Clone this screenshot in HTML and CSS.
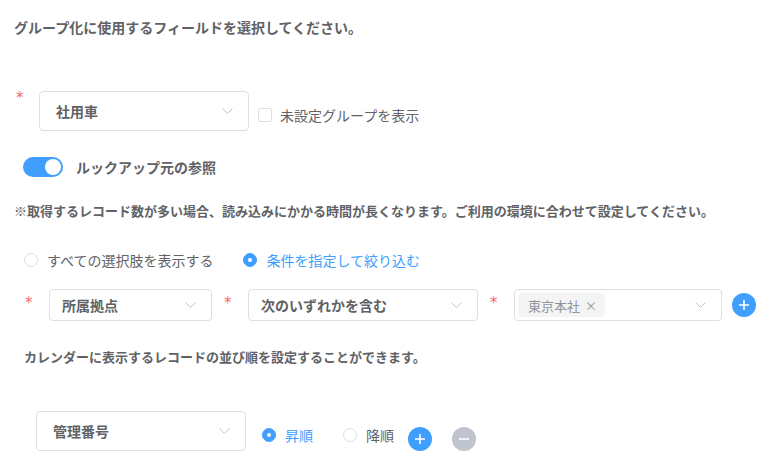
FILE: index.html
```html
<!DOCTYPE html>
<html lang="ja">
<head>
  <meta charset="UTF-8" />
  <title>グループ設定</title>
  <link rel="stylesheet" href="styles.css">
</head>
<body>
  <div class="page">
    <p class="title">グループ化に使用するフィールドを選択してください。</p>

    <div class="group-row">
      <span class="req req-first">*</span>
      <div class="select select-lg w-group">
        <span class="select-text">社用車</span>
        <svg class="chevron" width="11" height="6" viewBox="0 0 11 6"><polyline points="0.5,0.5 5.5,5.5 10.5,0.5" fill="none" stroke="#c0c4cc" stroke-width="1"/></svg>
      </div>
      <label class="check">
        <span class="check-box"></span>
        <span>未設定グループを表示</span>
      </label>
    </div>

    <div class="lookup">
      <span class="switch"><span class="switch-knob"></span></span>
      <span class="lookup-label">ルックアップ元の参照</span>
    </div>

    <p class="note">※取得するレコード数が多い場合、読み込みにかかる時間が長くなります。ご利用の環境に合わせて設定してください。</p>

    <div class="radios">
      <label class="radio">
        <span class="radio-dot"></span>
        <span>すべての選択肢を表示する</span>
      </label>
      <label class="radio checked">
        <span class="radio-dot"></span>
        <span>条件を指定して絞り込む</span>
      </label>
    </div>

    <div class="cond-row">
      <span class="req">*</span>
      <div class="select w-field">
        <span class="select-text">所属拠点</span>
        <svg class="chevron" width="11" height="6" viewBox="0 0 11 6"><polyline points="0.5,0.5 5.5,5.5 10.5,0.5" fill="none" stroke="#c0c4cc" stroke-width="1"/></svg>
      </div>
      <span class="req">*</span>
      <div class="select w-op">
        <span class="select-text">次のいずれかを含む</span>
        <svg class="chevron" width="11" height="6" viewBox="0 0 11 6"><polyline points="0.5,0.5 5.5,5.5 10.5,0.5" fill="none" stroke="#c0c4cc" stroke-width="1"/></svg>
      </div>
      <span class="req">*</span>
      <div class="select select-multi w-value">
        <span class="tag">東京本社<span class="tag-close">×</span></span>
        <svg class="chevron" width="11" height="6" viewBox="0 0 11 6"><polyline points="0.5,0.5 5.5,5.5 10.5,0.5" fill="none" stroke="#c0c4cc" stroke-width="1"/></svg>
      </div>
      <span class="circle-btn blue cond-add">
        <svg width="12" height="12" viewBox="0 0 12 12"><path d="M6 1v10M1 6h10" stroke="#fff" stroke-width="1.6"/></svg>
      </span>
    </div>

    <p class="sort-note">カレンダーに表示するレコードの並び順を設定することができます。</p>

    <div class="sort-row">
      <div class="select select-lg w-sort">
        <span class="select-text">管理番号</span>
        <svg class="chevron" width="11" height="6" viewBox="0 0 11 6"><polyline points="0.5,0.5 5.5,5.5 10.5,0.5" fill="none" stroke="#c0c4cc" stroke-width="1"/></svg>
      </div>
      <div class="sort-radios">
        <label class="radio checked">
          <span class="radio-dot"></span>
          <span>昇順</span>
        </label>
        <label class="radio">
          <span class="radio-dot"></span>
          <span>降順</span>
        </label>
      </div>
      <span class="circle-btn blue sort-add">
        <svg width="12" height="12" viewBox="0 0 12 12"><path d="M6 1v10M1 6h10" stroke="#fff" stroke-width="1.6"/></svg>
      </span>
      <span class="circle-btn gray sort-remove">
        <svg width="12" height="12" viewBox="0 0 12 12"><path d="M1 6h10" stroke="#fff" stroke-width="1.6"/></svg>
      </span>
    </div>
  </div>
</body>
</html>
```

FILE: styles.css
```css
body {
  margin: 0;
  background: #fff;
  font-family: "Noto Sans CJK JP", "Noto Sans", sans-serif;
  font-size: 14px;
  color: #606266;
}
p {
  margin: 0;
}
.page {
  padding-top: 17px;
}
.title {
  margin-left: 14px;
  line-height: 20px;
  font-weight: bold;
}
.req {
  color: #f56c6c;
  font-family: "DejaVu Sans", sans-serif;
  font-size: 15px;
  line-height: 15px;
  width: 9px;
  margin: 0 16px 0 12px;
}
.req-first {
  margin: 0 14px 0 16px;
  align-self: flex-start;
}

/* selects */
.select {
  box-sizing: border-box;
  height: 32px;
  border: 1px solid #dcdfe6;
  border-radius: 4px;
  display: flex;
  align-items: center;
  justify-content: space-between;
  padding: 0 15px 0 12px;
  background: #fff;
}
.select-lg {
  height: 40px;
  padding-left: 16px;
}
.select-text {
  font-weight: bold;
  color: #606266;
}
.chevron {
  flex: none;
}
.w-group { width: 210px; }
.w-field { width: 163px; }
.w-op { width: 230px; }
.w-value { width: 208px; }
.w-sort { width: 210px; }

.select-multi {
  padding-left: 3px;
}
.tag {
  height: 24px;
  box-sizing: border-box;
  display: inline-flex;
  align-items: center;
  padding: 0 8px 0 10px;
  background: #f4f4f5;
  border-radius: 4px;
  font-size: 13px;
  color: #909399;
}
.tag-close {
  margin-left: 5px;
  font-size: 12px;
  color: #909399;
}

/* group row */
.group-row {
  margin-top: 54px;
  display: flex;
}
.check {
  margin: 17px 0 0 9px;
  display: flex;
  align-items: center;
  height: 14px;
}
.check-box {
  box-sizing: border-box;
  width: 14px;
  height: 14px;
  border: 1px solid #dcdfe6;
  border-radius: 2px;
  margin-right: 8px;
}

/* lookup switch */
.lookup {
  margin: 26px 0 0 23px;
  display: flex;
  align-items: center;
  height: 20px;
}
.switch {
  width: 40px;
  height: 20px;
  border-radius: 10px;
  background: #409eff;
  display: flex;
  align-items: center;
  justify-content: flex-end;
  padding-right: 2px;
  box-sizing: border-box;
}
.switch-knob {
  width: 16px;
  height: 16px;
  border-radius: 50%;
  background: #fff;
}
.lookup-label {
  margin-left: 13px;
  font-weight: bold;
}

.note {
  margin: 24px 0 0 14px;
  line-height: 20px;
  font-size: 13px;
  font-weight: bold;
}

/* radios */
.radios {
  margin: 29px 0 0 24px;
  display: flex;
  line-height: 20px;
}
.radio {
  display: flex;
  align-items: center;
  margin-right: 30px;
}
.radio-dot {
  box-sizing: border-box;
  width: 14px;
  height: 14px;
  border: 1px solid #dcdfe6;
  border-radius: 50%;
  margin-right: 9px;
  position: relative;
}
.radio.checked {
  color: #409eff;
}
.radio.checked .radio-dot {
  border-color: #409eff;
  background: #409eff;
}
.radio.checked .radio-dot::after {
  content: "";
  position: absolute;
  left: 4px;
  top: 4px;
  width: 4px;
  height: 4px;
  border-radius: 50%;
  background: #fff;
}

/* condition row */
.cond-row {
  margin: 19px 0 0 13px;
  display: flex;
  align-items: center;
  height: 32px;
}
.cond-row .req {
  align-self: flex-start;
  margin-top: 7px;
  margin-right: 15px;
}
.circle-btn {
  width: 24px;
  height: 24px;
  border-radius: 50%;
  display: flex;
  align-items: center;
  justify-content: center;
  flex: none;
}
.circle-btn.blue { background: #409eff; }
.circle-btn.gray { background: #c0c4cc; }
.cond-add {
  margin-left: 10px;
}

.sort-note {
  margin: 26px 0 0 24px;
  line-height: 20px;
  font-size: 13px;
  font-weight: bold;
}

/* sort row */
.sort-row {
  margin: 44px 0 0 36px;
  display: flex;
  align-items: flex-start;
}
.sort-radios {
  display: flex;
  margin: 15px 0 0 16px;
  line-height: 18px;
}
.sort-radios .radio:last-child {
  margin-right: 0;
}
.sort-add {
  margin: 16px 0 0 14px;
}
.sort-remove {
  margin: 16px 0 0 20px;
}
```
